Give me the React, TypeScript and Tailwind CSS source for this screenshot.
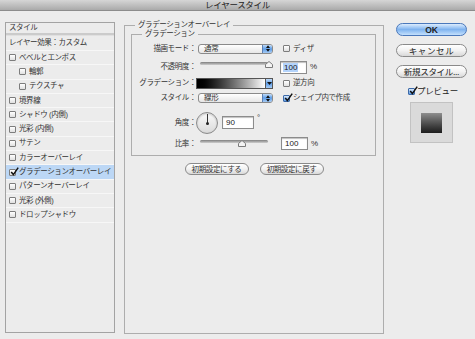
import React from "react";

function Check({ checked = false, aqua = false }: { checked?: boolean; aqua?: boolean }) {
  return (
    <span
      className={
        aqua && checked
          ? "relative inline-block w-[7px] h-[7px] shrink-0 rounded-[1px] border border-[#3d6aa8] bg-gradient-to-b from-[#d6e8fb] to-[#5b9be5]"
          : "relative inline-block w-[7px] h-[7px] shrink-0 rounded-[1px] border border-[#7d7d7d] bg-gradient-to-b from-white to-[#e0e0e0]"
      }
    >
      {checked && (
        <svg className="absolute left-[0px] top-[-3px]" width="9" height="9" viewBox="0 0 9 9">
          <path d="M1.2 5 L3.4 7.6 L8.2 0.6" fill="none" stroke="#111" strokeWidth="1.5" />
        </svg>
      )}
    </span>
  );
}

function Stepper() {
  return (
    <span className="w-[10px] h-full flex items-center justify-center border-l border-[#5b7fb2] bg-gradient-to-b from-[#c2dcf8] via-[#5d9de7] to-[#a6cbf4]">
      <svg width="4" height="7" viewBox="0 0 4 7">
        <path d="M0 3 L2 0.3 L4 3 Z M0 4 L2 6.7 L4 4 Z" fill="#111" />
      </svg>
    </span>
  );
}

function Select({ value }: { value: string }) {
  return (
    <div className="flex w-[75px] h-[10px] rounded-[3px] border border-[#8a8a8a] bg-gradient-to-b from-white to-[#e6e6e6] overflow-hidden">
      <span className="flex-1 pl-[5px] text-[7.5px] leading-[8px] tracking-[-0.3px] text-[#333]">{value}</span>
      <Stepper />
    </div>
  );
}

function Thumb() {
  return (
    <svg width="8" height="7" viewBox="0 0 8 7">
      <path d="M0.5 6.5 V3.5 L4 0.5 L7.5 3.5 V6.5 Z" fill="#f4f4f4" stroke="#7a7a7a" strokeWidth="1" />
    </svg>
  );
}

function Field({ value, w = "w-[27px]", sel = false }: { value: string; w?: string; sel?: boolean }) {
  return (
    <div className={`${w} h-[13px] border border-[#8c8c8c] bg-white shadow-[inset_0_1px_1px_rgba(0,0,0,0.25)] flex items-center pl-[2px] text-[8px] leading-[9px] text-[#222]`}>
      <span className={sel ? "bg-[#b3d3fb] px-[1px]" : "px-[1px]"}>{value}</span>
    </div>
  );
}

function Label({ text }: { text: string }) {
  return (
    <span className="w-[64px] shrink-0 text-right text-[7.5px] leading-[10px] tracking-[-0.4px] text-[#333]">{text}</span>
  );
}

function Opt({ text, checked = false }: { text: string; checked?: boolean }) {
  return (
    <div className="flex items-center gap-[3px]">
      <Check checked={checked} aqua />
      <span className="text-[7.5px] leading-[10px] tracking-[-0.4px] text-[#333]">{text}</span>
    </div>
  );
}

function Pill({ text, w }: { text: string; w: string }) {
  return (
    <div className={`${w} h-[12px] rounded-full border border-[#8a8a8a] bg-gradient-to-b from-white via-[#f2f2f2] to-[#d9d9d9] flex items-center justify-center text-[7.5px] leading-[9px] tracking-[-0.4px] text-[#333]`}>
      {text}
    </div>
  );
}

const items: { t: string; indent?: boolean; checked?: boolean }[] = [
  { t: "ベベルとエンボス" },
  { t: "輪郭", indent: true },
  { t: "テクスチャ", indent: true },
  { t: "境界線" },
  { t: "シャドウ (内側)" },
  { t: "光彩 (内側)" },
  { t: "サテン" },
  { t: "カラーオーバーレイ" },
  { t: "グラデーションオーバーレイ", checked: true },
  { t: "パターンオーバーレイ" },
  { t: "光彩 (外側)" },
  { t: "ドロップシャドウ" },
];

export default function App() {
  return (
    <div className="w-[475px] h-[339px] overflow-hidden bg-[#ececec] flex flex-col font-['Liberation_Sans','Noto_Sans_CJK_JP',sans-serif] text-[#1a1a1a]">
      <div className="h-[11px] shrink-0 bg-gradient-to-b from-[#d6d6d6] to-[#aaaaaa] border-b border-[#8c8c8c] text-center text-[8.5px] leading-[10px] tracking-[-0.3px] text-[#222]">
        レイヤースタイル
      </div>
      <div className="flex items-start">
        {/* Left list */}
        <div className="ml-[5px] mt-[11px] w-[110px] h-[311px] border border-[#a3a3a3] flex flex-col">
          <div className="h-[10px] flex items-center pl-[3px] text-[7.5px] leading-[10px] tracking-[-0.4px] text-[#333]">スタイル</div>
          <div className="h-[3px] bg-[#cbcbcb] border-b border-[#e0e0e0]" />
          <div className="h-[15px] flex items-center pl-[3px] text-[7.5px] leading-[10px] tracking-[-0.4px] text-[#333] border-b border-[#f7f7f7]">
            レイヤー効果：カスタム
          </div>
          {items.map((it) => (
            <div
              key={it.t}
              className={
                (it.checked ? "bg-[#bcd7f5] " : "") +
                (it.indent ? "pl-[13px] " : "pl-[3px] ") +
                "h-[14.3px] flex items-center gap-[3px] border-b border-[#f7f7f7]"
              }
            >
              <Check checked={it.checked} />
              <span className="text-[7.5px] leading-[10px] tracking-[-0.4px] text-[#333]">{it.t}</span>
            </div>
          ))}
        </div>

        {/* Main panel */}
        <fieldset className="ml-[9px] mt-[9px] w-[260px] h-[314px] min-w-0 m-0 p-0 border border-[#adadad]">
          <legend className="ml-[10px] px-[3px] text-[7.5px] leading-[10px] tracking-[-0.4px] text-[#333]">
            グラデーションオーバーレイ
          </legend>
          <fieldset className="ml-[6px] mr-[7px] min-w-0 p-0 pb-[5px] border border-[#adadad]">
            <legend className="ml-[10px] px-[3px] text-[7.5px] leading-[8px] tracking-[-0.4px] text-[#333]">
              グラデーション
            </legend>
            <div className="flex flex-col">
              {/* row 1 */}
              <div className="mt-[4px] h-[13px] flex items-center">
                <Label text="描画モード：" />
                <div className="ml-[2px]">
                  <Select value="通常" />
                </div>
                <div className="ml-[10px]">
                  <Opt text="ディザ" />
                </div>
              </div>
              {/* row 2 */}
              <div className="mt-[5px] h-[14px] flex items-center">
                <Label text="不透明度：" />
                <div className="ml-[2px] relative w-[75px] h-[14px]">
                  <div className="absolute left-[2px] w-[68px] top-[2px] h-[3px] rounded-full bg-gradient-to-b from-[#7f7f7f] to-[#cfcfcf]" />
                  <div className="absolute left-[67px] top-[1px]">
                    <Thumb />
                  </div>
                </div>
                <div className="ml-[7px]">
                  <Field value="100" sel />
                </div>
                <span className="ml-[3px] text-[8px] text-[#333]">%</span>
              </div>
              {/* row 3 */}
              <div className="mt-[3px] h-[12px] flex items-center">
                <Label text="グラデーション：" />
                <div className="flex w-[77px] h-[11px] border border-[#555]">
                  <div className="flex-1 bg-gradient-to-r from-black to-white" />
                  <span className="w-[7px] h-full flex items-center justify-center border-l border-[#555] bg-gradient-to-b from-[#c2dcf8] via-[#5d9de7] to-[#a6cbf4]">
                    <svg width="5" height="3" viewBox="0 0 5 3">
                      <path d="M0 0 L5 0 L2.5 3 Z" fill="#111" />
                    </svg>
                  </span>
                </div>
                <div className="ml-[10px]">
                  <Opt text="逆方向" />
                </div>
              </div>
              {/* row 4 */}
              <div className="mt-[3px] h-[12px] flex items-center">
                <Label text="スタイル：" />
                <div className="ml-[2px]">
                  <Select value="線形" />
                </div>
                <div className="ml-[10px]">
                  <Opt text="シェイプ内で作成" checked />
                </div>
              </div>
              {/* row 5 */}
              <div className="mt-[7px] h-[23px] flex items-center">
                <Label text="角度：" />
                <div className="relative w-[22px] h-[22px] rounded-full border border-[#8a8a8a] bg-gradient-to-b from-[#fafafa] to-[#dadada] shadow-[inset_0_1px_2px_rgba(0,0,0,0.2)]">
                  <div className="absolute left-[10px] top-[1px] w-px h-[10px] bg-[#333]" />
                  <div className="absolute left-[9px] top-[9px] w-[3px] h-[3px] rounded-full bg-[#222]" />
                </div>
                <div className="ml-[4px]">
                  <Field value="90" w="w-[32px]" />
                </div>
                <span className="ml-[3px] self-start mt-[3px] text-[8px] leading-[8px] text-[#333]">°</span>
              </div>
              {/* row 6 */}
              <div className="mt-[3px] h-[13px] flex items-center">
                <Label text="比率：" />
                <div className="ml-[2px] relative w-[75px] h-[13px]">
                  <div className="absolute left-[2px] w-[68px] top-[3px] h-[3px] rounded-full bg-gradient-to-b from-[#7f7f7f] to-[#cfcfcf]" />
                  <div className="absolute left-[40px] top-[3px]">
                    <Thumb />
                  </div>
                </div>
                <div className="ml-[8px]">
                  <Field value="100" />
                </div>
                <span className="ml-[3px] text-[8px] text-[#333]">%</span>
              </div>
            </div>
          </fieldset>
          <div className="mt-[7px] flex justify-center gap-[11px]">
            <Pill text="初期設定にする" w="w-[64px]" />
            <Pill text="初期設定に戻す" w="w-[64px]" />
          </div>
        </fieldset>

        {/* Right column */}
        <div className="ml-[12px] mt-[12px] w-[71px] flex flex-col">
          <div className="h-[13px] rounded-full border border-[#4a78bb] bg-gradient-to-b from-[#dcecfd] via-[#7fb3ef] to-[#c4e0fc] flex items-center justify-center text-[8.5px] leading-[10px] font-semibold text-[#222]">
            OK
          </div>
          <div className="mt-[8px] h-[13px] rounded-full border border-[#8a8a8a] bg-gradient-to-b from-white via-[#f2f2f2] to-[#d9d9d9] flex items-center justify-center text-[8.5px] leading-[10px] tracking-[0.6px] text-[#222]">
            キャンセル
          </div>
          <div className="mt-[8px] h-[13px] rounded-full border border-[#8a8a8a] bg-gradient-to-b from-white via-[#f2f2f2] to-[#d9d9d9] flex items-center justify-center text-[8.5px] leading-[10px] tracking-[-0.3px] text-[#222]">
            新規スタイル...
          </div>
          <div className="mt-[8px] h-[10px] pl-[12px] flex items-center gap-[2px]">
            <Check checked aqua />
            <span className="text-[8.5px] leading-[10px] tracking-[-0.3px] text-[#222]">プレビュー</span>
          </div>
          <div className="mt-[6px] ml-[14px] w-[43px] h-[41px] border border-[#c2c2c2] bg-[#dadada] flex items-center justify-center">
            <div className="w-[21px] h-[20px] bg-gradient-to-b from-[#8e8e8e] to-[#1c1c1c]" />
          </div>
        </div>
      </div>
    </div>
  );
}
